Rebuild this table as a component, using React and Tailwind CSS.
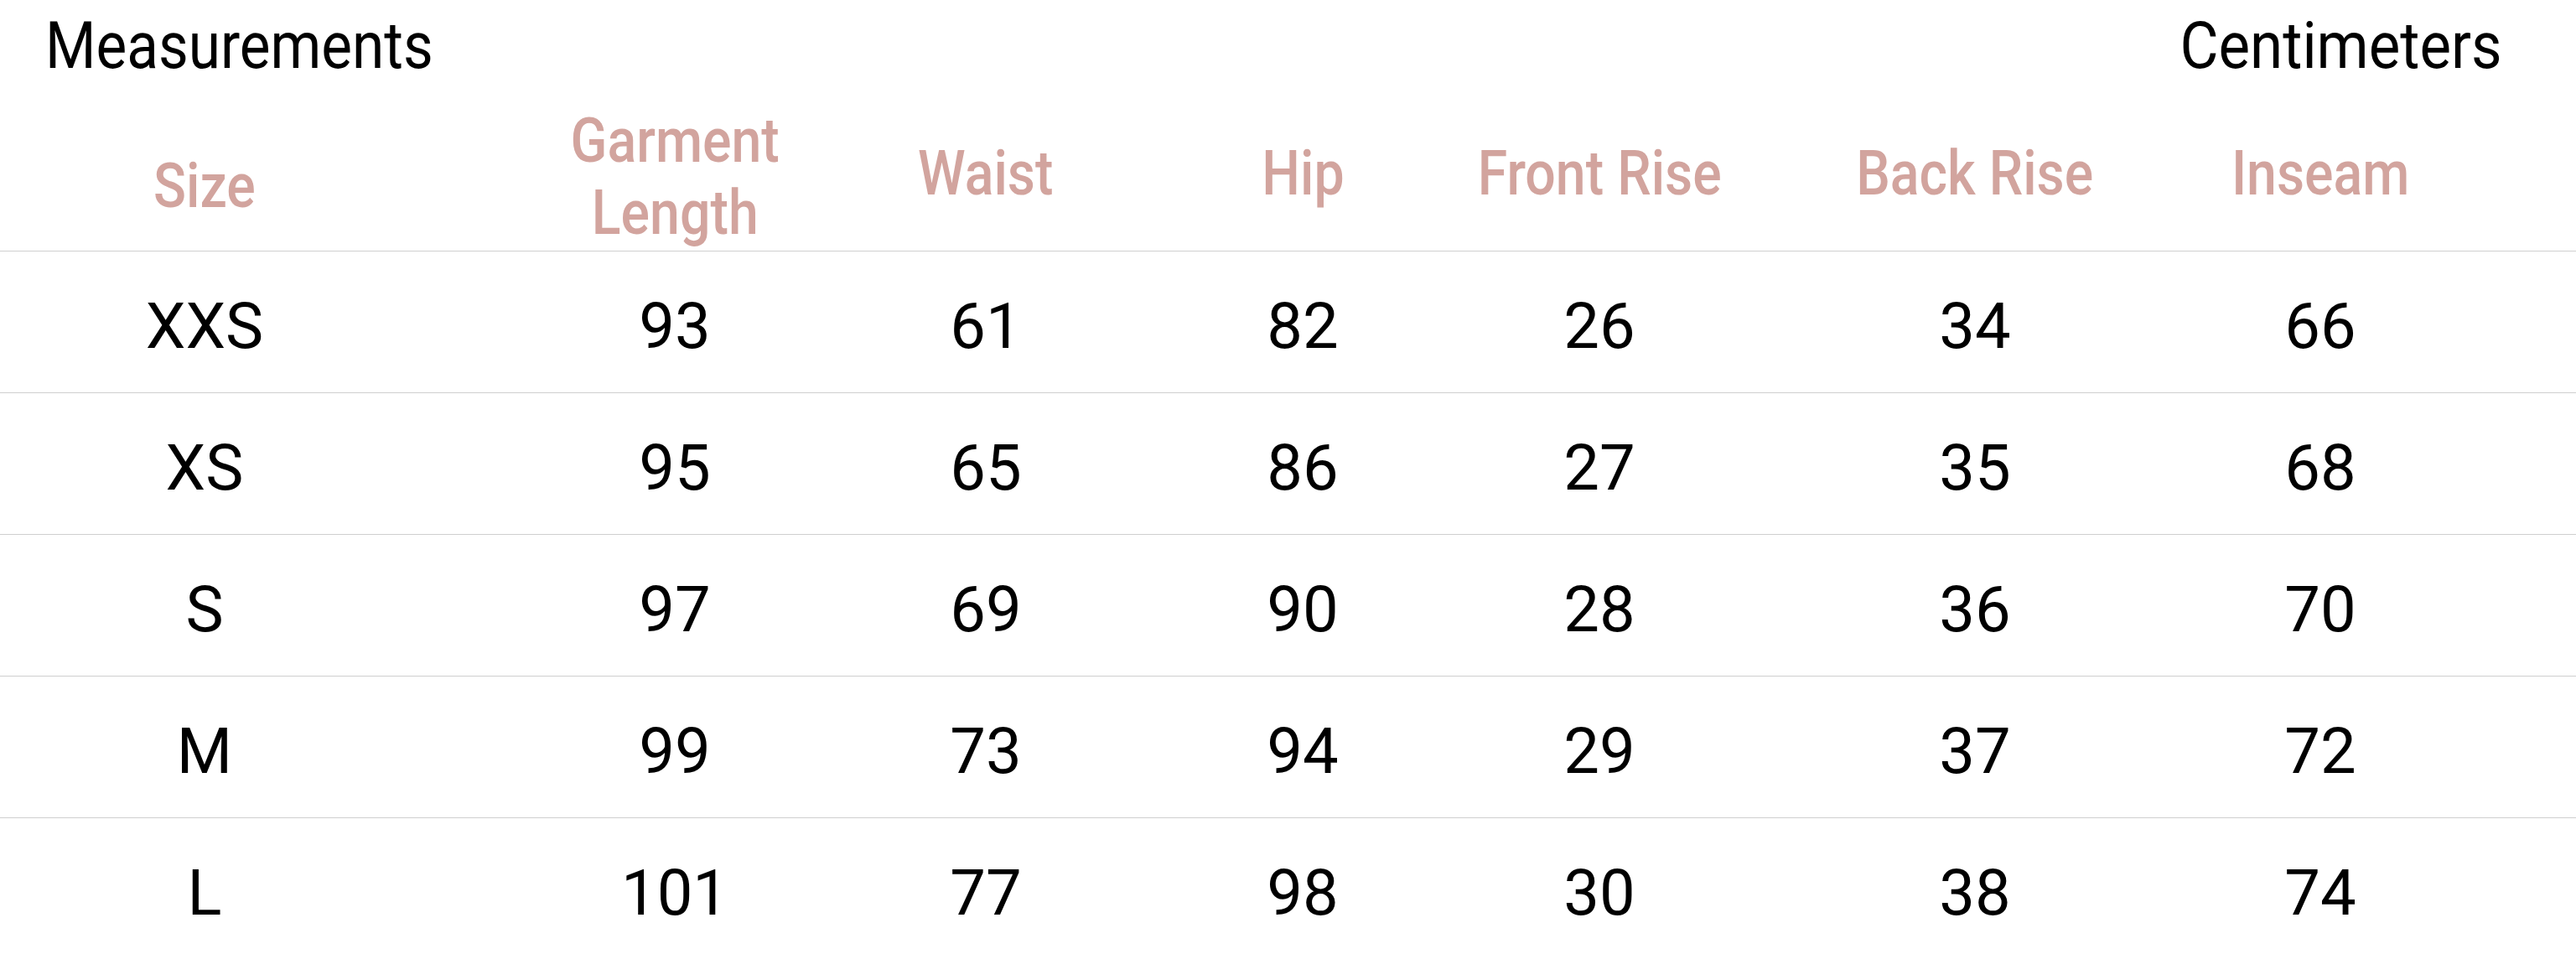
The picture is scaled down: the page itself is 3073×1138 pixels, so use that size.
import React from "react";

const headers = [
  ["Size"],
  ["Garment", "Length"],
  ["Waist"],
  ["Hip"],
  ["Front Rise"],
  ["Back Rise"],
  ["Inseam"],
];

const rows = [
  ["XXS", "93", "61", "82", "26", "34", "66"],
  ["XS", "95", "65", "86", "27", "35", "68"],
  ["S", "97", "69", "90", "28", "36", "70"],
  ["M", "99", "73", "94", "29", "37", "72"],
  ["L", "101", "77", "98", "30", "38", "74"],
];

// left offset of each 320px column, so the centres land where the chart has them
const gaps = ["ml-[84px]", "ml-[241px]", "ml-[51px]", "ml-[58px]", "ml-[34px]", "ml-[128px]", "ml-[92px]"];

const SizeChart = () => {
  return (
    <div className="min-h-screen w-full bg-white font-['Roboto','Liberation_Sans',sans-serif] text-black">
      {/* Title bar */}
      <div className="flex items-start justify-between pl-[54px] pr-[88px] pt-[10px] h-[100px]">
        <span className="inline-block origin-left scale-x-[0.9] text-[77px] leading-[90px]">Measurements</span>
        <span className="inline-block origin-right scale-x-[0.92] text-[77px] leading-[90px]">Centimeters</span>
      </div>

      {/* Column headers */}
      <div className="flex h-[200px] items-center border-b border-[#cfcfcf] pt-[14px] text-[#d2a49e] font-medium">
        {headers.map((lines, i) => (
          <div key={i} className={`${gaps[i]} flex w-[320px] shrink-0 flex-col items-center ${i === 0 ? "mt-[30px]" : ""} ${i === 1 ? "mt-[8px]" : ""}`}>
            {lines.map((l) => (
              <span key={l} className="inline-block scale-x-[0.87] whitespace-nowrap text-[74px] leading-[86px]">
                {l}
              </span>
            ))}
          </div>
        ))}
      </div>

      {/* Body */}
      {rows.map((r) => (
        <div key={r[0]} className="flex h-[169px] items-center border-b border-[#cfcfcf] pt-[10px]">
          {r.map((v, i) => (
            <div key={i} className={`${gaps[i]} flex w-[320px] shrink-0 justify-center`}>
              <span className="inline-block text-[76px] leading-[90px]">{v}</span>
            </div>
          ))}
        </div>
      ))}
    </div>
  );
};

export default function App() {
  return <SizeChart />;
}
